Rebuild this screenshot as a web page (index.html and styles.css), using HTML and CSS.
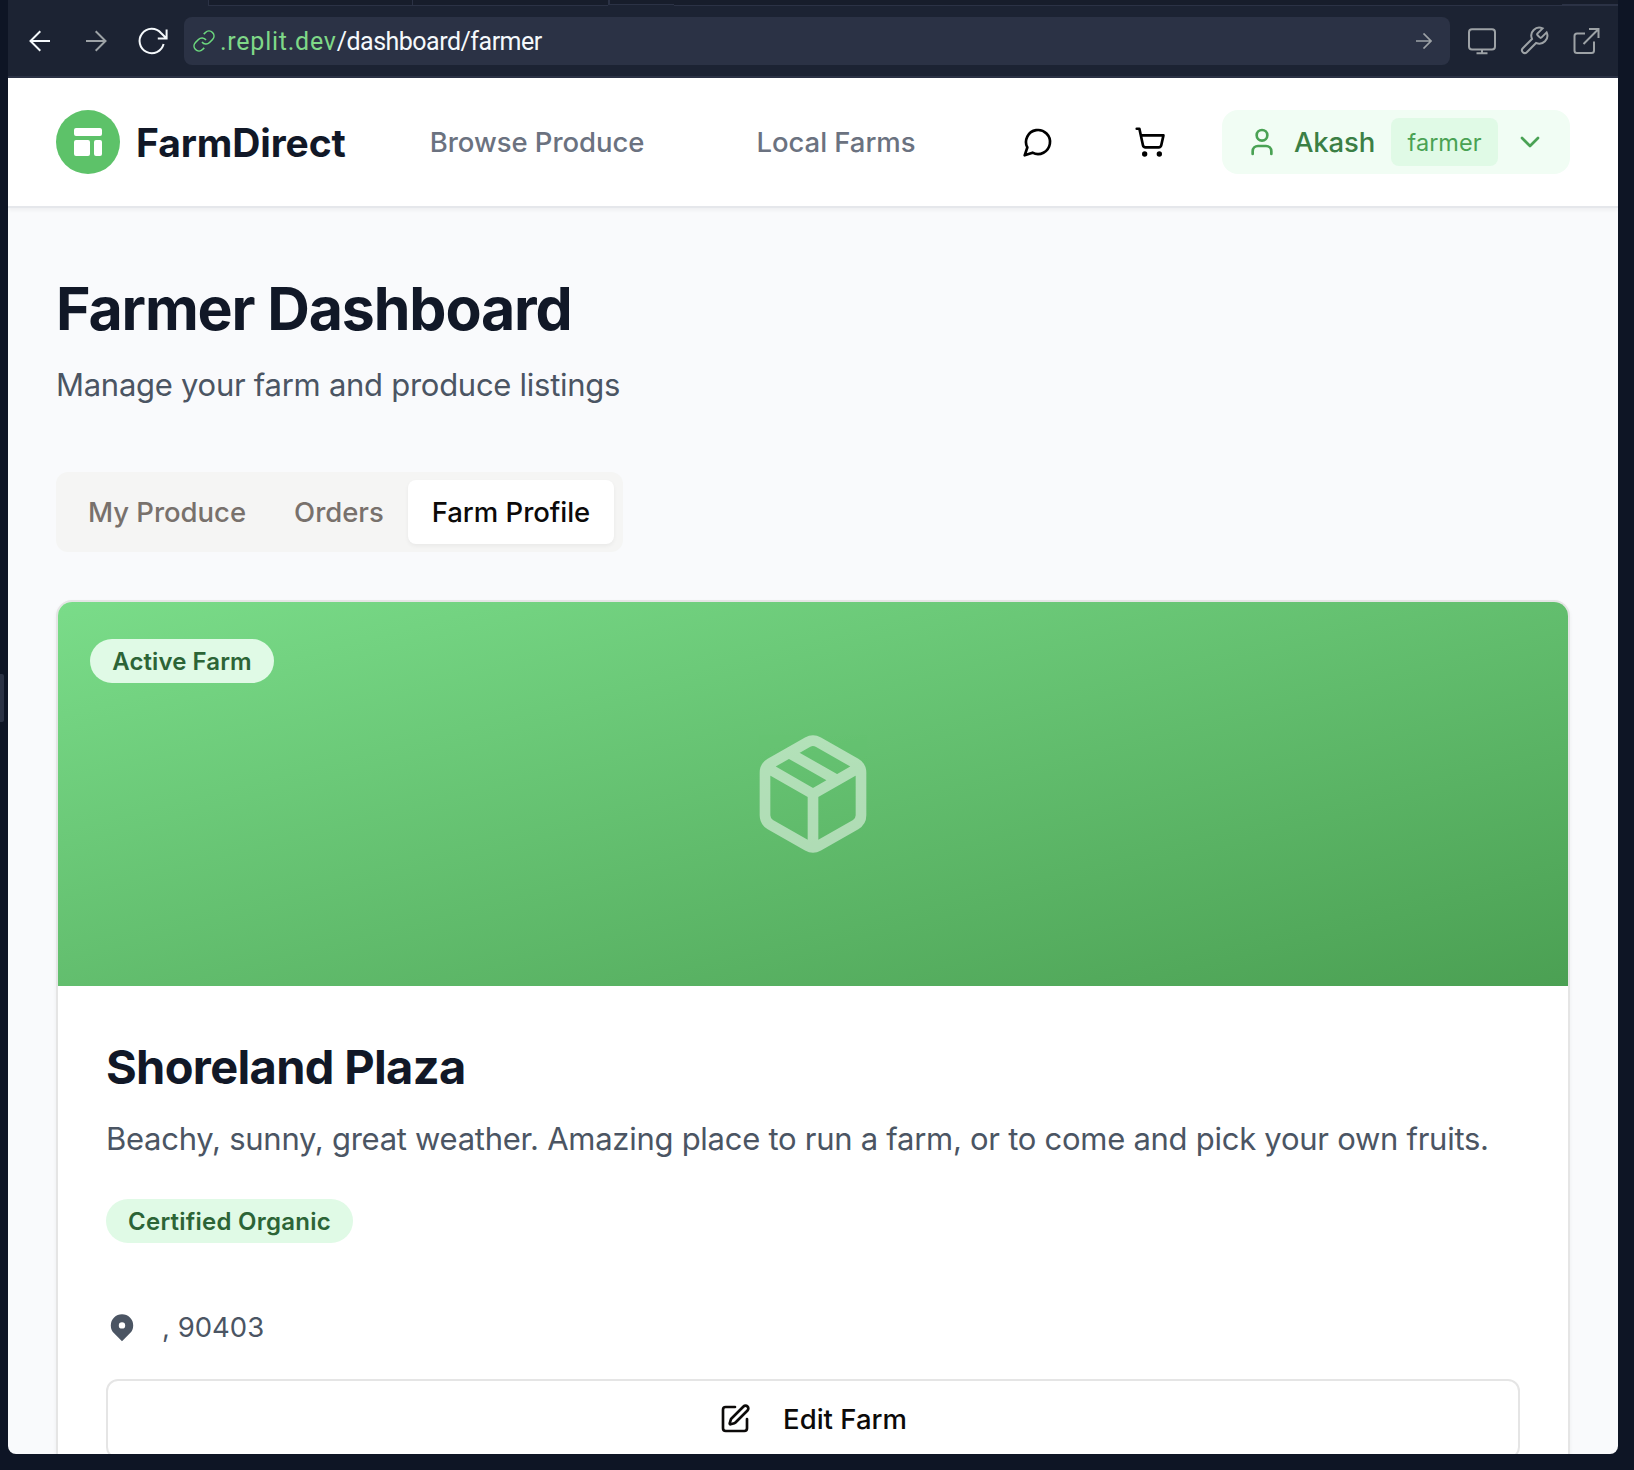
FILE: index.html
```html
<!DOCTYPE html>
<html lang="en">
<head>
<meta charset="utf-8">
<title>FarmDirect</title>
<link rel="stylesheet" href="styles.css">
</head>
<body>
<div class="resize-handle"></div>
<div class="window">
  <div class="tabstrip"><div class="tab tab-a"></div><div class="tab tab-b"></div><div class="tab tab-c"></div><div class="tab-rest"></div><div class="tab-end"></div></div>
  <div class="toolbar">
    <svg class="tool back" viewBox="0 0 32 32"><path d="M26 16H6.5M16.3 6.3 6.5 16l9.8 9.7"/></svg>
    <svg class="tool forward" viewBox="0 0 32 32"><path d="M6 16h19.5M15.7 6.3 25.5 16l-9.8 9.7"/></svg>
    <svg class="tool reload" viewBox="0 0 32 32"><path d="M30.6 4.5v9h-8.800M30.3 13.3 25 8A12.2 12.2 0 1 0 27.6 19"/></svg>
    <div class="address">
      <svg class="link" viewBox="0 0 24 24"><path d="M10 13a5 5 0 0 0 7.54.54l3-3a5 5 0 0 0-7.07-7.07l-1.72 1.71"/><path d="M14 11a5 5 0 0 0-7.54-.54l-3 3a5 5 0 0 0 7.07 7.07l1.71-1.71"/></svg>
      <span class="url"><span class="host">.replit.dev</span>/dashboard/farmer</span>
      <svg class="go" viewBox="0 0 16 16"><path d="M0 8h15M7.5.5 15 8l-7.5 7.5"/></svg>
    </div>
    <svg class="tool monitor" viewBox="0 0 32 32"><rect x="3" y="4.2" width="26" height="20.300" rx="3"/><path d="M16 24.500v4M10.500 28.200h11"/></svg>
    <svg class="tool wrench" viewBox="0 0 24 24"><path d="M14.7 6.3a1 1 0 0 0 0 1.4l1.6 1.6a1 1 0 0 0 1.4 0l3.770-3.770a6 6 0 0 1-7.940 7.940l-6.910 6.910a2.120 2.120 0 0 1-3-3l6.910-6.910a6 6 0 0 1 7.940-7.940l-3.760 3.760z"/></svg>
    <svg class="tool external" viewBox="0 0 32 32"><path d="M15 8.500H7a2.500 2.500 0 0 0-2.500 2.500v14.500A2.500 2.500 0 0 0 7 28h14.500a2.500 2.500 0 0 0 2.500-2.500V16.500M19 4h9.500v9M28.500 4 13.500 19"/></svg>
  </div>

  <header class="header">
    <div class="logo"><svg viewBox="0 0 20 20"><path d="M3 4a1 1 0 011-1h12a1 1 0 011 1v2a1 1 0 01-1 1H4a1 1 0 01-1-1V4zM3 10a1 1 0 011-1h6a1 1 0 011 1v6a1 1 0 01-1 1H4a1 1 0 01-1-1v-6zM14 9a1 1 0 00-1 1v6a1 1 0 001 1h2a1 1 0 001-1v-6a1 1 0 00-1-1h-2z"/></svg></div>
    <span class="brand">FarmDirect</span>
    <a class="nav browse">Browse Produce</a>
    <a class="nav local">Local Farms</a>
    <svg class="icon chat" viewBox="0 0 24 24"><path d="M7.9 20A9 9 0 1 0 4 16.1L2 22Z"/></svg>
    <svg class="icon cart" viewBox="0 0 24 24"><circle cx="8" cy="21" r="1"/><circle cx="19" cy="21" r="1"/><path d="M2.050 2.050h2l2.660 12.420a2 2 0 0 0 2 1.580h9.780a2 2 0 0 0 1.950-1.570l1.650-7.430H5.120"/></svg>
    <div class="account">
      <svg class="icon" viewBox="0 0 24 24"><path d="M19 21v-2a4 4 0 0 0-4-4H9a4 4 0 0 0-4 4v2"/><circle cx="12" cy="7" r="4"/></svg>
      <span class="user">Akash</span>
      <span class="role">farmer</span>
      <svg class="icon" viewBox="0 0 24 24"><path d="m6 9 6 6 6-6"/></svg>
    </div>
  </header>

  <main class="main">
    <h1 class="title">Farmer Dashboard</h1>
    <p class="subtitle">Manage your farm and produce listings</p>
    <div class="tabs">
      <div class="tabitem">My Produce</div>
      <div class="tabitem">Orders</div>
      <div class="tabitem active">Farm Profile</div>
    </div>
    <section class="card">
      <div class="banner">
        <svg class="package" viewBox="0 0 24 24"><path d="m7.500 4.270 9 5.150M21 8a2 2 0 0 0-1-1.730l-7-4a2 2 0 0 0-2 0l-7 4A2 2 0 0 0 3 8v8a2 2 0 0 0 1 1.730l7 4a2 2 0 0 0 2 0l7-4A2 2 0 0 0 21 16ZM3.300 7l8.700 5 8.700-5M12 22V12"/></svg>
        <div class="badge status">Active Farm</div>
      </div>
      <div class="content">
        <h2 class="name">Shoreland Plaza</h2>
        <p class="desc">Beachy, sunny, great weather. Amazing place to run a farm, or to come and pick your own fruits.</p>
        <div class="badge organic">Certified Organic</div>
        <div class="place"><svg viewBox="0 0 20 20"><path d="M5.050 4.050a7 7 0 119.900 9.900L10 18.900l-4.950-4.950a7 7 0 010-9.900zM10 11a2 2 0 100-4 2 2 0 000 4z"/></svg><span>, 90403</span></div>
        <div class="button"><svg class="icon" viewBox="0 0 24 24"><path d="M12 3H5a2 2 0 0 0-2 2v14a2 2 0 0 0 2 2h14a2 2 0 0 0 2-2v-7"/><path d="M18.375 2.625a1 1 0 0 1 3 3l-9.013 9.014a2 2 0 0 1-.853.505l-2.873.84a.5.5 0 0 1-.62-.62l.84-2.873a2 2 0 0 1 .506-.852z"/></svg><span>Edit Farm</span></div>
      </div>
    </section>
  </main>
</div>
</body>
</html>
```
FILE: styles.css
```css
* { box-sizing: border-box; }
body {
  margin: 0;
  width: 1634px;
  height: 1470px;
  overflow: hidden;
  background: #0e1525;
  font-family: Inter, "Liberation Sans", sans-serif;
}
h1, h2, p { margin: 0; white-space: nowrap; }
span, a { white-space: nowrap; }
svg { display: block; flex: none; }

.resize-handle {
  position: absolute;
  left: 0;
  top: 674px;
  width: 4px;
  height: 48px;
  border-radius: 0 2px 2px 0;
  background: #2b3245;
}
.window {
  height: 1454px;
  margin: 0 16px 0 8px;
  overflow: hidden;
  border-radius: 0 0 8px 8px;
  background: #f9fafc;
}

/* Editor tabs and address bar */
.tabstrip {
  display: flex;
  height: 6px;
  padding-left: 200px;
  background: #1c2333;
}
.tab, .tab-rest, .tab-end { background: #171d2b; border-bottom: 1px solid #2b3245; }
.tab { border-left: 1px solid #2b3245; }
.tab-a { width: 204px; }
.tab-b { width: 196px; }
.tab-c { width: 66px; height: 5px; border-left-width: 2px; }
.tab-rest { flex: 1; }
.tab-end { width: 56px; border-bottom-width: 2px; }
.toolbar {
  display: flex;
  align-items: center;
  height: 72px;
  padding: 0 16px;
  border-bottom: 2px solid #2b3245;
  background: #1c2333;
}
.tool, .link, .go { fill: none; stroke-width: 2; }
.tool { width: 32px; height: 32px; stroke: #9da2a6; }
.back, .reload { stroke: #f5f9fc; }
.forward, .reload { margin-left: 24px; }
.address {
  display: flex;
  align-items: center;
  flex: 1;
  height: 48px;
  margin: 0 16px;
  padding: 0 18px 0 8px;
  border-radius: 8px;
  background: #2b3245;
}
.link { width: 24px; height: 24px; stroke: #6cd97e; stroke-width: 1.6; }
.url {
  flex: 1;
  margin-left: 4px;
  padding-top: 1px;
  color: #f5f9fc;
  font: 25px/32px Roboto, "Liberation Sans", sans-serif;
  letter-spacing: -0.5px;
}
.host { color: #7fd888; letter-spacing: 0.75px; }
.go { width: 16px; height: 16px; stroke: #9da2a6; stroke-width: 1.7; }
.wrench { margin-left: 20px; stroke-width: 1.5; }
.external { margin-left: 20px; }

/* Site header */
.header {
  display: flex;
  align-items: center;
  height: 130px;
  padding: 0 48px;
  border-bottom: 2px solid #e5e7eb;
  background: #fff;
  box-shadow: 0 2px 4px rgba(0, 0, 0, 0.05);
}
.icon {
  width: 32px;
  height: 32px;
  fill: none;
  stroke: currentColor;
  stroke-width: 2;
  stroke-linecap: round;
  stroke-linejoin: round;
}
.logo {
  display: grid;
  place-items: center;
  width: 64px;
  height: 64px;
  border-radius: 50%;
  background: #5dc269;
}
.logo svg { width: 40px; height: 40px; fill: #fff; }
.brand {
  margin-left: 16px;
  color: #111827;
  font-size: 39px;
  font-weight: 700;
  letter-spacing: -0.1px;
}
.nav { color: #6b7280; font-size: 27.5px; font-weight: 500; letter-spacing: -0.05px; }
.browse { margin-left: 84px; }
.local { margin-left: 112px; }
.chat { margin-left: auto; }
.cart { margin: 0 56px 0 80px; }
.account {
  display: flex;
  align-items: center;
  gap: 16px;
  width: 348px;
  height: 64px;
  padding: 0 24px;
  border-radius: 16px;
  background: #f1fdf4;
  color: #4aa254;
}
.user { color: #3b7f45; font-size: 27.5px; font-weight: 500; letter-spacing: -0.15px; }
.role {
  flex: 1;
  height: 48px;
  border-radius: 8px;
  background: #e0fae6;
  font-size: 23.5px;
  line-height: 49px;
  text-align: center;
}

/* Dashboard */
.main { padding: 64px 48px 0; }
.title {
  color: #111827;
  font-size: 59px;
  font-weight: 700;
  line-height: 74px;
  letter-spacing: -1.15px;
}
.subtitle, .desc {
  margin-top: 16px;
  color: #4b5563;
  font-size: 31px;
  line-height: 48px;
  letter-spacing: -0.27px;
}
.subtitle { margin-top: 15px; }
.tabs {
  display: flex;
  width: 567px;
  height: 80px;
  margin-top: 63px;
  padding: 8px;
  border-radius: 12px;
  background: #f5f5f4;
}
.tabitem {
  padding: 0 24px;
  border-radius: 8px;
  color: #78716c;
  font-size: 27.5px;
  font-weight: 500;
  line-height: 64px;
  letter-spacing: -0.03px;
}
.active { background: #fff; color: #0c0a09; box-shadow: 0 2px 4px rgba(0, 0, 0, 0.05); }
.card {
  height: 900px;
  margin-top: 48px;
  overflow: hidden;
  border: 2px solid #e5e5e5;
  border-radius: 16px;
  background: #fff;
  box-shadow: 0 2px 4px rgba(0, 0, 0, 0.05);
}
.banner {
  position: relative;
  display: grid;
  place-items: center;
  height: 384px;
  background: linear-gradient(to bottom right, #7adc89, #4ba053);
}
.package {
  width: 128px;
  height: 128px;
  fill: none;
  stroke: #fff;
  stroke-width: 2;
  stroke-linecap: round;
  stroke-linejoin: round;
  opacity: 0.5;
}
.badge {
  height: 44px;
  border-radius: 22px;
  background: #e0fae6;
  color: #2c6436;
  font-size: 24px;
  font-weight: 600;
  line-height: 45px;
  letter-spacing: 0.1px;
  text-align: center;
}
.status { position: absolute; left: 32px; top: 37px; width: 184px; }
.content { padding: 48px; }
.name {
  color: #111827;
  font-size: 47px;
  font-weight: 700;
  line-height: 66px;
  letter-spacing: -0.67px;
}
.desc { margin-top: 15px; }
.organic { width: 247px; margin-top: 36px; letter-spacing: 0.25px; }
.place {
  display: flex;
  align-items: center;
  gap: 24px;
  height: 40px;
  margin-top: 64px;
  color: #4b5563;
  font-size: 27.5px;
}
.place svg { width: 32px; height: 32px; fill: currentColor; }
.button {
  display: flex;
  align-items: center;
  justify-content: center;
  gap: 32px;
  height: 80px;
  margin-top: 32px;
  border: 2px solid #e5e5e5;
  border-radius: 12px;
  color: #0c0a09;
  font-size: 27.5px;
  font-weight: 500;
}
```
